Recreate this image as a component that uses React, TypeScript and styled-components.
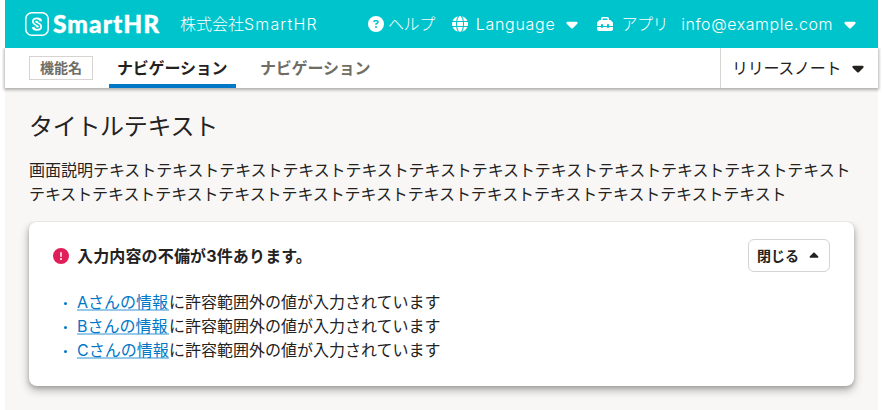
import React from 'react';
import styled, { createGlobalStyle } from 'styled-components';
import {
  FaCaretDown,
  FaCaretUp,
  FaCircleExclamation,
  FaCircleQuestion,
  FaGlobe,
  FaToolbox,
} from 'react-icons/fa6';

const GlobalStyle = createGlobalStyle`
  * { box-sizing: border-box; }
  body {
    margin: 0;
    background: #fff;
    color: #23221e;
    font-family: Inter, "Noto Sans CJK JP", sans-serif;
    font-size: 16px;
    line-height: 24px;
    overflow: hidden;
  }
  svg { display: block; flex: none; }
`;

const Page = styled.div`
  width: 873px;
  height: 410px;
  margin-left: 5px;
  background: #f8f7f6;
`;

const Header = styled.header`
  display: flex;
  align-items: center;
  height: 48px;
  padding: 0 22px 0 20px;
  background: #00c4cc;
  color: #fff;
  font-weight: 300;
`;

const Logo = styled.div`
  display: flex;
  align-items: center;
  gap: 4px;
  width: 155px;
`;

const Wordmark = styled.span`
  font: 900 24.5px/24px Lato, sans-serif;
  -webkit-text-stroke: 0.4px #fff;
  letter-spacing: 1.05px;
`;

const Label = styled.span<{ $spacing?: number }>`
  white-space: nowrap;
  letter-spacing: ${({ $spacing = 0 }) => $spacing}px;
`;

const Menu = styled.div`
  display: flex;
  align-items: center;
  margin-left: auto;
`;

const MenuItem = styled.div<{ $gap: number; $before?: number }>`
  display: flex;
  align-items: center;
  gap: ${({ $gap }) => $gap}px;
  margin-left: ${({ $before = 0 }) => $before}px;
`;

const Caret = styled(FaCaretDown)<{ $space: number }>`
  width: 12px;
  height: 18px;
  margin-left: ${({ $space }) => $space}px;
`;

const NavBar = styled.nav`
  display: flex;
  align-items: center;
  height: 40px;
  padding-left: 24px;
  background: #fff;
  box-shadow: 0 1px 3px 1px rgba(3, 3, 2, 0.3);
  clip-path: inset(0 -3px -6px -3px);
`;

const AppName = styled.span`
  width: 64px;
  height: 24px;
  margin-right: 16px;
  border: 1px solid #d6d3d0;
  color: #706d65;
  font-size: 14px;
  font-weight: 700;
  line-height: 22px;
  text-align: center;
`;

const Tab = styled.a<{ $active?: boolean }>`
  height: 40px;
  width: 127px;
  margin-right: 16px;
  padding: 8px 0 0 8px;
  border-bottom: ${({ $active }) => ($active ? '4px solid #0077c7' : '0')};
  color: ${({ $active }) => ($active ? '#23221e' : '#706d65')};
  font-weight: 700;
  white-space: nowrap;
  letter-spacing: -0.2px;
`;

const Release = styled.div`
  display: flex;
  align-items: center;
  width: 158px;
  height: 40px;
  margin-left: auto;
  padding-left: 11px;
  border-left: 1px solid #d6d3d0;
`;

const Main = styled.main`
  padding: 20px 24px 0;
`;

const Title = styled.h1`
  margin: 0 0 12px;
  font-size: 24px;
  font-weight: 400;
  line-height: 38px;
  letter-spacing: -0.3px;
`;

const Description = styled.p`
  margin: 0 0 16px;
  white-space: nowrap;
`;

const Panel = styled.section`
  height: 164px;
  padding: 17px 24px 24px;
  border-radius: 8px;
  background: #fff;
  box-shadow: 0 4px 8px 1px rgba(3, 3, 2, 0.24), 0 2px 4px rgba(3, 3, 2, 0.18);
  clip-path: inset(-1px -14px -18px -14px);
`;

const PanelHead = styled.div`
  display: flex;
  align-items: center;
  gap: 8px;
  height: 33px;
  margin-bottom: 18px;
`;

const PanelTitle = styled.h2`
  margin: 0;
  font-size: 16px;
  font-weight: 700;
  letter-spacing: 0.15px;
`;

const ToggleButton = styled.button`
  display: flex;
  align-items: center;
  gap: 8px;
  width: 82px;
  height: 33px;
  margin-left: auto;
  padding: 0 0 0 8px;
  border: 1px solid #d6d3d0;
  border-radius: 6px;
  background: #fff;
  color: #23221e;
  font: 700 14px/24px Inter, "Noto Sans CJK JP", sans-serif;
  white-space: nowrap;
`;

const List = styled.ul`
  margin: 0;
  padding: 0;
  list-style: none;
`;

const Item = styled.li`
  display: flex;
  align-items: flex-start;
  height: 24px;
  padding-left: 11px;
`;

const Dot = styled.span`
  width: 3px;
  height: 3px;
  margin: 12px 10px 0 0;
  border-radius: 50%;
  background: #0077c7;
`;

const ErrorLink = styled.a`
  width: 92px;
  height: 21px;
  border-bottom: 2px solid #99c9e9;
  color: #0077c7;
  line-height: 24px;
  white-space: nowrap;
`;

const SymbolMark = () => (
  <svg width="24" height="24" viewBox="0 0 24 24" fill="none" stroke="#fff">
    <rect x="0.8" y="0.8" width="22.4" height="22.4" rx="6" strokeWidth="1.5" />
    <path
      d="M15 9.3C14.6 7.2 9.3 7 9.2 9.6C9.1 12.2 15 11.8 14.9 14.6C14.8 17.2 9.3 17 9 14.9"
      strokeWidth="4.4"
    />
    <path
      d="M14.2 9.8C13.8 7.6 9.5 7.2 9.4 9.6C9.3 12 14.7 12 14.6 14.6C14.5 17 10.2 16.6 9.8 14.4"
      stroke="#00c4cc"
      strokeWidth="1.5"
    />
  </svg>
);

const people = ['A', 'B', 'C'];

export default function App() {
  return (
    <>
      <GlobalStyle />
      <Page>
        <Header>
          <Logo>
            <SymbolMark />
            <Wordmark>SmartHR</Wordmark>
          </Logo>
          <Label>
            株式会社<Label $spacing={1.15}>SmartHR</Label>
          </Label>
          <Menu>
            <MenuItem $gap={4}>
              <FaCircleQuestion size={16} />
              <Label $spacing={-0.4}>ヘルプ</Label>
            </MenuItem>
            <MenuItem $gap={8} $before={17}>
              <FaGlobe size={16} />
              <Label $spacing={0.7}>Language</Label>
              <Caret $space={3} />
            </MenuItem>
            <MenuItem $gap={8} $before={19}>
              <FaToolbox size={16} />
              <Label $spacing={-0.4}>アプリ</Label>
            </MenuItem>
            <MenuItem $gap={0} $before={13}>
              <Label $spacing={0.55}>info@example.com</Label>
              <Caret $space={11} />
            </MenuItem>
          </Menu>
        </Header>
        <NavBar>
          <AppName>機能名</AppName>
          <Tab $active>ナビゲーション</Tab>
          <Tab>ナビゲーション</Tab>
          <Release>
            <Label $spacing={-0.3}>リリースノート</Label>
            <Caret $space={11} />
          </Release>
        </NavBar>
        <Main>
          <Title>タイトルテキスト</Title>
          <Description>
            画面説明<Label $spacing={-0.1}>{'テキスト'.repeat(12)}</Label>
            <br />
            <Label $spacing={-0.1}>{'テキスト'.repeat(12)}</Label>
          </Description>
          <Panel>
            <PanelHead>
              <FaCircleExclamation size={16} color="#e01e5a" />
              <PanelTitle>入力内容の不備が3件あります。</PanelTitle>
              <ToggleButton type="button">
                閉じる
                <FaCaretUp size={14} />
              </ToggleButton>
            </PanelHead>
            <List>
              {people.map((name) => (
                <Item key={name}>
                  <Dot />
                  <ErrorLink>{name}さんの情報</ErrorLink>
                  <Label>に許容範囲外の値が入力されています</Label>
                </Item>
              ))}
            </List>
          </Panel>
        </Main>
      </Page>
    </>
  );
}
